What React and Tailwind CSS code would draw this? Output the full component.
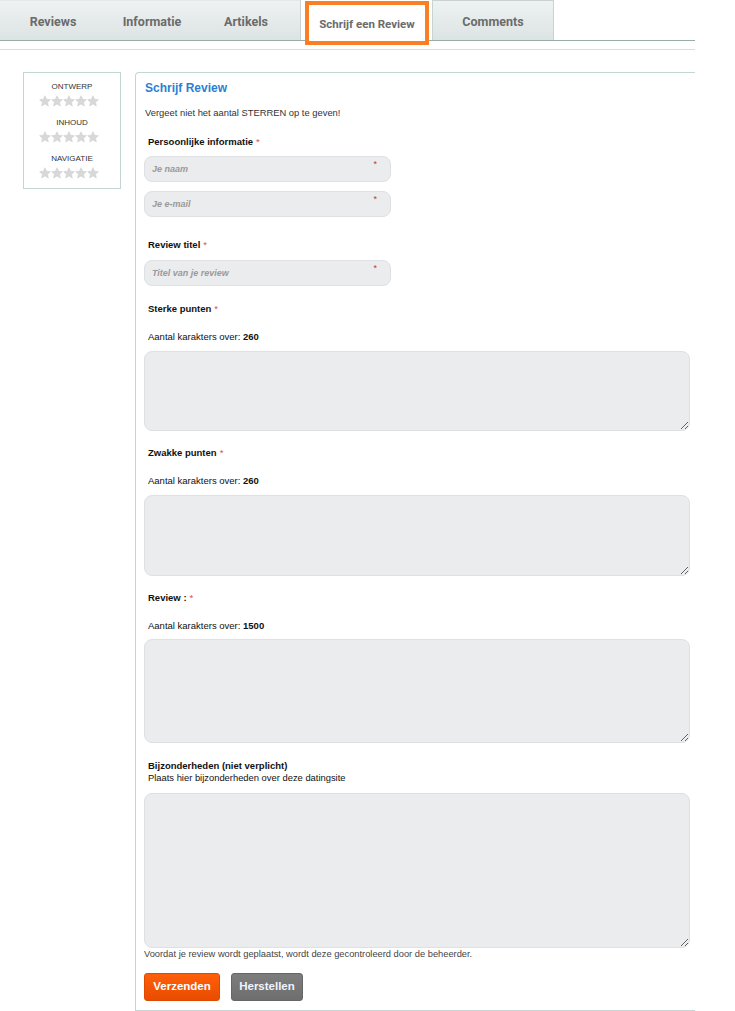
import React from "react";

const font = { fontFamily: "'Liberation Sans', Arial, sans-serif" };
const tabFont = { fontFamily: "Roboto, sans-serif" };

function Star() {
  return (
    <svg width="12" height="12" viewBox="0 0 24 24">
      <path
        d="M12 1.5l3.2 7.1 7.6.7-5.8 5.1 1.8 7.6L12 18l-6.8 4 1.8-7.6-5.8-5.1 7.6-.7z"
        fill="#d8d8d8"
        stroke="#cacaca"
        strokeWidth="1"
      />
    </svg>
  );
}

function Rating({ label, className = "" }) {
  return (
    <div className={"flex flex-col items-center " + className}>
      <div className="text-[8px] leading-[10px] text-[#333]">{label}</div>
      <div className="flex mt-[3px] mr-[6px]">
        <Star />
        <Star />
        <Star />
        <Star />
        <Star />
      </div>
    </div>
  );
}

function Req() {
  return <span className="text-[#d9534f] font-normal ml-[3px]">*</span>;
}

function Label({ children, req, className = "" }) {
  return (
    <div className={"pl-[4px] text-[9.5px] leading-[11px] font-bold text-[#111] " + className}>
      {children}
      {req && <Req />}
    </div>
  );
}

function Field({ placeholder, className = "" }) {
  return (
    <div className={"relative w-[247px] h-[26px] " + className}>
      <input
        placeholder={placeholder}
        className="block w-full h-[26px] rounded-lg bg-[#ebecee] border border-[#dfe0e3] px-[7px] text-[9px] italic font-bold outline-none placeholder:text-[#9a9a9a]"
        style={font}
      />
      <span className="absolute right-[14px] top-[2px] text-[9px] text-[#c0392b]">*</span>
    </div>
  );
}

function Area({ h, className = "" }) {
  return (
    <textarea
      className={"block w-[546px] rounded-lg bg-[#ebecee] border border-[#dfe0e3] outline-none " + h + " " + className}
    />
  );
}

function Count({ n, className = "" }) {
  return (
    <div className={"pl-[4px] text-[9.5px] leading-[11px] text-[#111] " + className}>
      Aantal karakters over: <b>{n}</b>
    </div>
  );
}

function Tab({ w, children }) {
  return (
    <div
      className={w + " h-full flex items-center justify-center pt-[3px] text-[12.5px] font-bold text-[#6b6b6b]"}
      style={tabFont}
    >
      {children}
    </div>
  );
}

export default function App() {
  return (
    <div className="w-[735px] h-[1011px] bg-white overflow-hidden" style={font}>
      {/* tabs */}
      <div className="w-[695px] h-[41px] flex border-b border-[#9aaca6]">
        <div className="flex h-[40px] w-[300px] bg-gradient-to-b from-[#eef2f2] to-[#dce4e3] border-t border-[#e3e9e8]">
          <Tab w="w-[106px]">Reviews</Tab>
          <Tab w="w-[92px]">Informatie</Tab>
          <Tab w="w-[96px]">Artikels</Tab>
        </div>
        <div className="h-[40px] w-[132px] bg-white border-l border-[#c9d4d2] flex">
          <div
            className="ml-[4px] mt-[1px] h-[44px] w-[124px] border-[4px] border-[#fa7f22] bg-white flex items-center justify-center pt-[3px] text-[11.5px] font-bold text-[#6b6b6b]"
            style={tabFont}
          >
            Schrijf een Review
          </div>
        </div>
        <div
          className="h-[40px] w-[122px] bg-gradient-to-b from-[#eef2f2] to-[#dce4e3] border-x border-t border-[#c9d4d2] flex items-center justify-center pt-[3px] text-[12.5px] font-bold text-[#6b6b6b]"
          style={tabFont}
        >
          Comments
        </div>
      </div>
      <div className="w-[695px] mt-[8px] border-b border-[#d8e0de]" />

      <div className="flex mt-[22px]">
        {/* sidebar */}
        <div className="ml-[23px] w-[98px] h-[117px] border border-[#c3d6d3] pt-[9px]">
          <Rating label="ONTWERP" />
          <Rating label="INHOUD" className="mt-[11px]" />
          <Rating label="NAVIGATIE" className="mt-[11px]" />
        </div>

        {/* form card */}
        <div className="ml-[14px] w-[560px] h-[939px] border-l border-t border-b border-[#c3d6d3] rounded-tl-sm pl-[8px]">
          <div className="mt-[8px] ml-[1px] text-[12px] leading-[14px] font-bold text-[#2a7fd4]">Schrijf Review</div>
          <div className="mt-[12px] ml-[1px] text-[9.4px] leading-[11px] text-[#333]">
            Vergeet niet het aantal STERREN op te geven!
          </div>

          <Label req className="mt-[18px]">Persoonlijke informatie</Label>
          <Field placeholder="Je naam" className="mt-[9px]" />
          <Field placeholder="Je e-mail" className="mt-[9px]" />

          <Label req className="mt-[22px]">Review titel</Label>
          <Field placeholder="Titel van je review" className="mt-[10px]" />

          <Label req className="mt-[17px]">Sterke punten</Label>
          <Count n="260" className="mt-[17px]" />
          <Area h="h-[80px]" className="mt-[9px]" />

          <Label req className="mt-[16px]">Zwakke punten</Label>
          <Count n="260" className="mt-[17px]" />
          <Area h="h-[81px]" className="mt-[9px]" />

          <Label req className="mt-[16px]">Review :</Label>
          <Count n="1500" className="mt-[17px]" />
          <Area h="h-[104px]" className="mt-[8px]" />

          <div className="mt-[17px] pl-[4px] text-[9.5px] leading-[11px] text-[#111]">
            <div className="font-bold">Bijzonderheden (niet verplicht)</div>
            <div className="mt-[1px] text-[9.4px]">Plaats hier bijzonderheden over deze datingsite</div>
          </div>
          <Area h="h-[155px]" className="mt-[10px]" />
          <div className="mt-[1px] text-[9.3px] leading-[11px] text-[#444]">
            Voordat je review wordt geplaatst, wordt deze gecontroleerd door de beheerder.
          </div>

          <div className="flex gap-[11px] mt-[13px]">
            <button className="w-[76px] h-[28px] rounded-[3px] bg-gradient-to-b from-[#ff5f0a] to-[#e84c00] border border-[#e04a00] text-white text-[11.5px] font-bold">
              Verzenden
            </button>
            <button className="w-[72px] h-[28px] rounded-[3px] bg-gradient-to-b from-[#7d7d7d] to-[#6e6e6e] border border-[#666] text-[#eef4ff] text-[11.5px] font-bold">
              Herstellen
            </button>
          </div>
        </div>
      </div>
    </div>
  );
}
